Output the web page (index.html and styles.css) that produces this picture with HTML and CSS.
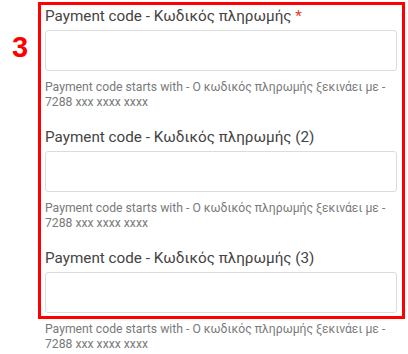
FILE: index.html
```html
<html>

<head>
  <meta charset="utf-8">
  <link rel="stylesheet" href="styles.css">
</head>

<body>
  <div class="row">
    <div class="step">3</div>

    <div class="main">
      <div class="highlight">
        <div class="field">
          <label for="code1">Payment code - Κωδικός πληρωμής <span class="req">*</span></label>
          <input type="text" id="code1" />
          <p class="help">Payment code starts with - Ο κωδικός πληρωμής ξεκινάει με - 7288 xxx xxxx xxxx</p>
        </div>

        <div class="field">
          <label for="code2">Payment code - Κωδικός πληρωμής (2)</label>
          <input type="text" id="code2" />
          <p class="help">Payment code starts with - Ο κωδικός πληρωμής ξεκινάει με - 7288 xxx xxxx xxxx</p>
        </div>

        <div class="field last">
          <label for="code3">Payment code - Κωδικός πληρωμής (3)</label>
          <input type="text" id="code3" />
        </div>
      </div>
      <p class="help after">Payment code starts with - Ο κωδικός πληρωμής ξεκινάει με - 7288 xxx xxxx xxxx</p>
    </div>
  </div>
</body>

</html>
```

FILE: styles.css
```css
body {
  margin: 0;
  padding: 0;
  background-color: #ffffff;
  font-family: Roboto, "Noto Sans", Arial, sans-serif;
}

.row {
  display: flex;
  align-items: flex-start;
  padding-top: 2px;
}

.step {
  width: 26px;
  padding-left: 12px;
  padding-top: 31px;
  font-family: "Liberation Sans", Arial, sans-serif;
  font-weight: bold;
  font-size: 29px;
  line-height: 29px;
  color: #f00;
}

.main {
  width: 367px;
}

.highlight {
  border: 3px solid #f00;
  padding: 2px 5px 3px 4px;
}

.field {
  display: flex;
  flex-direction: column;
  margin-bottom: 18px;
}

.field.last {
  margin-bottom: 0;
}

label {
  font-size: 15.25px;
  line-height: 18px;
  color: #444;
  margin-bottom: 5px;
}

.req {
  color: #e53935;
}

input[type="text"] {
  box-sizing: border-box;
  width: 352px;
  height: 41px;
  margin: 0;
  border: 1px solid #dcdcdc;
  border-radius: 3px;
  background: #fff;
}

.help {
  margin: 9px 0 0 0;
  width: 352px;
  font-size: 12.2px;
  line-height: 15px;
  color: #7a7a7a;
}

.help.after {
  margin: 3px 0 0 7px;
}
```
